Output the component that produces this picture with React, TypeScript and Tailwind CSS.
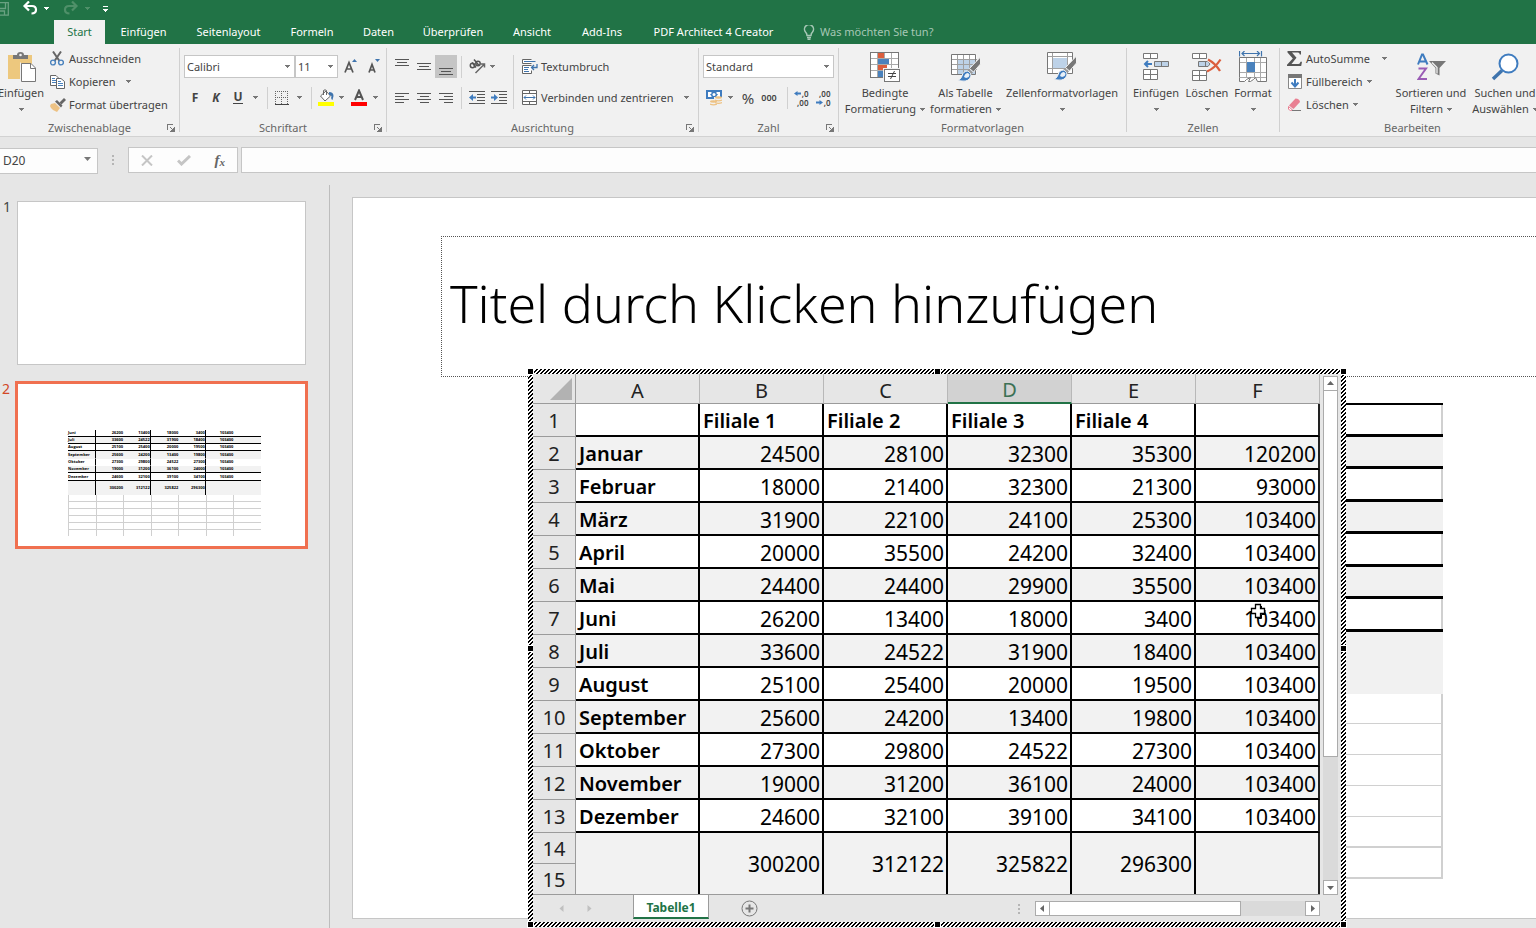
import type { ReactNode } from "react";

/* ---------- small shared pieces ---------- */

function Caret({ className = "text-[#777777]" }: { className?: string }) {
  return (
    <svg width="5" height="3" viewBox="0 0 5 3" className={"shrink-0 " + className} fill="currentColor" shapeRendering="crispEdges" aria-hidden="true">
      <path d="M0 0h5v1H0zM1 1h3v1H1zM2 2h1v1H2z" />
    </svg>
  );
}

function Divider({ className = "h-[22px]" }: { className?: string }) {
  return <div className={"w-px shrink-0 bg-[#d0d0d0] " + className} />;
}

function Launcher() {
  return (
    <svg width="8" height="8" viewBox="0 0 8 8" fill="none" stroke="#777" shapeRendering="crispEdges" aria-hidden="true">
      <path d="M0.5 6V0.5H6M3 3l3 3" />
      <path d="M7.5 3v4.5H3M6.5 4v2.5H4" />
    </svg>
  );
}

function Group({ label, className, launcher, children }: { label: string; className: string; launcher?: boolean; children: ReactNode }) {
  return (
    <section className={"flex shrink-0 " + className} aria-label={label}>
      <div className="flex min-w-0 flex-1 flex-col">
        <div className="flex h-[76px] pt-[3px]">{children}</div>
        <div className="flex h-4 items-center">
          <span className="w-4" />
          <span className="flex-1 text-center text-[#666666]">{label}</span>
          <span className="flex w-4 justify-center">
            {launcher && (
              <button type="button" aria-label={label + " anzeigen"}>
                <Launcher />
              </button>
            )}
          </span>
        </div>
      </div>
      <div className="my-1 w-px bg-[#d0d0d0]" />
    </section>
  );
}

function BigButton({ icon, lines, className }: { icon: ReactNode; lines: string[]; className: string }) {
  return (
    <button type="button" className={"flex shrink-0 flex-col items-center whitespace-nowrap " + className}>
      <span className="flex h-9 items-center justify-center pt-1">{icon}</span>
      <span className="flex h-5 items-center">{lines[0]}</span>
      <span className="flex h-3 items-center gap-1">
        {lines[1]}
        <Caret />
      </span>
    </button>
  );
}

function IconButton({ label, className = "w-[22px]", children }: { label: string; className?: string; children: ReactNode }) {
  return (
    <button type="button" aria-label={label} className={"flex h-[23px] shrink-0 items-center justify-center " + className}>
      {children}
    </button>
  );
}

/* ---------- icons ---------- */

const PasteIcon = () => (
  <svg width="30" height="32" viewBox="0 0 30 32" aria-hidden="true">
    <path d="M2 4h24v24H2z" fill="#edc87e" />
    <path d="M7 8V4h4a3.500 3 0 0 1 7 0h4v4z" fill="#777" />
    <circle cx="14.500" cy="4" r="1.300" fill="#f1f1f1" />
    <path d="M15.500 12.500H25l4.500 4.500v13.500h-14z" fill="#fff" stroke="#777" />
    <path d="M24.500 12.500v5h5" fill="none" stroke="#777" />
    <path d="M14.500 31V11.500" stroke="#f1f1f1" />
  </svg>
);

const CutIcon = () => (
  <svg width="14" height="15" viewBox="0 0 14 15" fill="none" aria-hidden="true">
    <path d="M3 0.500 9.500 10M11 0.500 4.500 10" stroke="#666" strokeWidth="2" />
    <circle cx="3" cy="11.500" r="2.400" stroke="#4a82bd" strokeWidth="1.400" />
    <circle cx="11" cy="11.500" r="2.400" stroke="#4a82bd" strokeWidth="1.400" />
  </svg>
);

const CopyIcon = () => (
  <svg width="15" height="14" viewBox="0 0 15 14" fill="#fff" stroke="#666" aria-hidden="true">
    <path d="M0.500 0.500H6L8.500 3v7.500h-8z" />
    <path d="M2 3.500h3M2 5.500h4M2 7.500h4" stroke="#4a82bd" />
    <path d="M6.500 3.500H11l3.500 3v7h-8z" />
    <path d="M8 6.500h3M8 8.500h5M8 10.500h5" stroke="#4a82bd" />
  </svg>
);

const BrushIcon = () => (
  <svg width="16" height="14" viewBox="0 0 16 14" aria-hidden="true">
    <path d="M1 6l4-1 5 5-3 4-2-1-2-1-2-2-1-2z" fill="#edc284" />
    <path d="M5 3.500 7 2l5.500 5.500L11 9.500z" fill="#666" />
    <path d="M9.500 4.500 14 0l2 2-4.500 4.500z" fill="#666" />
  </svg>
);

const BordersIcon = () => (
  <svg width="14" height="14" viewBox="0 0 14 14" fill="none" stroke="#666" shapeRendering="crispEdges" aria-hidden="true">
    <path d="M0 0.500h13M0 6.500h13M0.500 0v13M6.500 0v13M12.500 0v13" strokeDasharray="1 1" />
    <path d="M0 13.500h14" stroke="#444" />
  </svg>
);

const FillIcon = () => (
  <svg width="17" height="17" viewBox="0 0 17 17" fill="none" aria-hidden="true">
    <path d="M2.500 7 8 2l4.500 5L7 12z" fill="#fff" stroke="#666" />
    <path d="M5.500 6V1.500Q7 0 8.500 1.500V6" stroke="#666" />
    <path d="M11 3q4.500 0 4.500 4l-1 4q-2-1-1-4-1-1-2.500-1z" fill="#3f74ad" />
    <path d="M0 13h16v4H0z" fill="#ff0" />
  </svg>
);

const FontColorIcon = () => (
  <svg width="16" height="17" viewBox="0 0 16 17" aria-hidden="true">
    <path d="M4 11 8 1.500 12 11M5.500 8h5" fill="none" stroke="#555" strokeWidth="2" />
    <path d="M0 13h16v4H0z" fill="#f00" />
  </svg>
);

function SizeIcon({ up }: { up?: boolean }) {
  return (
    <svg width="14" height="15" viewBox="0 0 14 15" aria-hidden="true">
      <path d={up ? "M1 13.500 5 3.500l4 10M2.500 10h5" : "M2 13.500l3-8 3 8M3 11h4"} fill="none" stroke="#555" strokeWidth="1.700" />
      <path d={up ? "M8 3h5L10.500 0z" : "M8 0h5L10.500 3z"} fill="#3f74ad" />
    </svg>
  );
}

function LinesIcon({ d }: { d: string }) {
  return (
    <svg width="14" height="16" viewBox="0 0 14 16" fill="none" stroke="#555" shapeRendering="crispEdges" aria-hidden="true">
      <path d={d} />
    </svg>
  );
}

const OrientationIcon = () => (
  <svg width="17" height="16" viewBox="0 0 17 16" fill="none" stroke="#555" strokeWidth="1.500" aria-hidden="true">
    <circle cx="3.500" cy="6.500" r="2.200" />
    <path d="M3 3.500 7 8.500M5 0.500l5 6" />
    <circle cx="9" cy="4.500" r="2.200" />
    <path d="M6.500 14 15.500 5M12 5h3.500v3.500" stroke="#666" />
  </svg>
);

function IndentIcon({ right }: { right?: boolean }) {
  return (
    <svg width="16" height="13" viewBox="0 0 16 13" fill="none" shapeRendering="crispEdges" aria-hidden="true">
      <path d="M0 0.500h16M8 3.500h8M8 6.500h8M8 9.500h8M0 12.500h16" stroke="#555" />
      <path d={right ? "M0 5.500h3V3l4 3.500L3 10V7.500H0z" : "M7 5.500H4V3L0 6.500 4 10V7.500h3z"} fill="#3f7cbf" shapeRendering="auto" />
    </svg>
  );
}

const WrapIcon = () => (
  <svg width="16" height="16" viewBox="0 0 16 16" fill="none" stroke="#666" aria-hidden="true">
    <path d="M9.500 4.500h-9v-4h9M9.500 6.500h-9v8h9v-3" fill="#fff" />
    <path d="M2 2.500h11.500M2 8.500h5M2 10.500h4M2 12.500h5" stroke="#3f74ad" />
    <path d="M15 5v3.500H9.500M12 6l-2.500 2.500L12 11" stroke="#3f74ad" strokeWidth="1.300" />
  </svg>
);

const MergeIcon = () => (
  <svg width="16" height="16" viewBox="0 0 16 16" fill="#fff" stroke="#666" aria-hidden="true">
    <path d="M0.500 0.500h14v14h-14zM0.500 3.500h14M0.500 11.500h14M7.500 0.500v3M7.500 11.500v3" />
    <path d="M2 7.500h11M4 5.500l-2 2 2 2M11 5.500l2 2-2 2" stroke="#3f74ad" fill="none" />
  </svg>
);

const MoneyIcon = () => (
  <svg width="17" height="17" viewBox="0 0 17 17" aria-hidden="true">
    <path d="M0 1h16v9H0z" fill="#3f7cbf" />
    <path d="M2 3h3.500v1.500L4 5.500 5.500 7v1H2zM14 3h-3.500v1.500L12 5.500 10.500 7v1H14z" fill="#fff" />
    <circle cx="8" cy="5.500" r="1.500" fill="#fff" />
    <path d="M8 8h9v9H8zM4 11h5v6H4z" fill="#f1f1f1" />
    <ellipse cx="12.500" cy="8.500" rx="3.500" ry="1.200" fill="#edc284" />
    <path d="M9 10.500q3.500 1.500 7 0v1.300q-3.500 1.500-7 0zM9 13q3.500 1.500 7 0v1.300q-3.500 1.500-7 0z" fill="#edc284" />
    <ellipse cx="7.500" cy="12.500" rx="3.500" ry="1.200" fill="#edc284" />
    <path d="M4 14.500q3.500 1.500 7 0v1.300q-3.500 1.500-7 0z" fill="#edc284" />
  </svg>
);

function DecimalIcon({ more }: { more?: boolean }) {
  return (
    <span className="flex w-[15px] flex-col text-[8px] font-semibold leading-[9px] text-[#444444]">
      <span className={"flex items-center " + (more ? "justify-between" : "justify-end")}>
        {more && (
          <svg width="7" height="5" viewBox="0 0 7 5" fill="#3f7cbf" aria-hidden="true">
            <path d="M7 1.500H3.500V0L0 2.500 3.500 5V3.500H7z" />
          </svg>
        )}
        {more ? ",0" : ",00"}
      </span>
      <span className={"flex items-center " + (more ? "justify-end" : "justify-between")}>
        {!more && (
          <svg width="7" height="5" viewBox="0 0 7 5" fill="#3f7cbf" aria-hidden="true">
            <path d="M0 1.500h3.500V0L7 2.500 3.500 5V3.500H0z" />
          </svg>
        )}
        {more ? ",00" : ",0"}
      </span>
    </span>
  );
}

const ConditionalIcon = () => (
  <svg width="31" height="31" viewBox="0 0 31 31" shapeRendering="crispEdges" aria-hidden="true">
    <path d="M0.500 0.500h28v25h-28z" fill="#fff" stroke="#777" />
    <path d="M1 6.500h27M1 12.500h27M1 18.500h27M7.500 1v24M14.500 1v24M21.500 1v24" stroke="#aaa" />
    <path d="M8 1h6v5H8zM8 13h9v5H8z" fill="#db5e3d" />
    <path d="M8 7h11v5H8zM8 19h5v6H8z" fill="#4a82bd" />
    <path d="M13 16h18v15H13z" fill="#f1f1f1" />
    <path d="M14.500 17.500h15v12h-15z" fill="#fff" stroke="#777" />
    <path d="M18 21.500h8M18 24.500h8M24.500 19l-4 8" stroke="#444" fill="none" shapeRendering="auto" />
  </svg>
);

const StyleBrush = () => (
  <>
    <path d="M29.500 5v7l-7 8-4-3.500z" fill="#777" stroke="#f1f1f1" />
    <path d="M18 17l4 3.500-2 2-4-3.500z" fill="#999" />
    <path d="M6 28.500q4-1 5-4.500 1-5 6-5 3.500 2 3 5-2 6-9 5z" fill="#3f7cbf" stroke="#f1f1f1" />
    <path d="M13 25q1-4 4-4l1.500 1.500q0 3-3.500 3.500z" fill="#e8f0f8" />
  </>
);

const TableStyleIcon = () => (
  <svg width="30" height="30" viewBox="0 0 30 30" aria-hidden="true">
    <path d="M0.500 2.500h25v20h-25z" fill="#fff" />
    <path d="M7 8h18v14H7z" fill="#bdd2e8" />
    <path d="M0 7.500h26M0 12.500h26M0 17.500h26M6.500 2v21M12.500 2v21M18.500 2v21" stroke="#a0a0a0" />
    <path d="M0.500 2.500h24v20h-24z" fill="none" stroke="#777" />
    <StyleBrush />
  </svg>
);

const CellStyleIcon = () => (
  <svg width="30" height="30" viewBox="0 0 30 30" aria-hidden="true">
    <path d="M0.500 0.500h25v21h-25z" fill="#fff" />
    <path d="M0 4.500h26M0 16.500h26M5.500 0v22M20.500 0v22" stroke="#a0a0a0" />
    <path d="M6 6h14v10H6z" fill="#bdd2e8" />
    <path d="M0.500 0.500h25v21h-25z" fill="none" stroke="#777" />
    <g transform="translate(0 -1)">
      <StyleBrush />
    </g>
  </svg>
);

const InsertCellsIcon = () => (
  <svg width="27" height="28" viewBox="0 0 27 28" fill="#fff" stroke="#777" aria-hidden="true">
    <path d="M0.500 0.500h14v5h-14zM7.500 0.500v5M0.500 16.500h14v10h-14zM0.500 21.500h14M7.500 16.500v10" />
    <path d="M11.500 8.500h14v5h-14zM18.500 8.500v5" fill="#bdd2e8" />
    <path d="M9 11H2M5 8l-3 3 3 3" stroke="#3f7cbf" strokeWidth="2" fill="none" />
  </svg>
);

const DeleteCellsIcon = () => (
  <svg width="30" height="28" viewBox="0 0 30 28" fill="#fff" stroke="#777" aria-hidden="true">
    <path d="M0.500 0.500h14v5h-14zM7.500 0.500v5M0.500 17.500h14v10h-14zM0.500 22.500h14M7.500 17.500v10" />
    <path d="M6.500 8.500H16l2 2.500-2 2.500H6.500zM13.500 8.500v5" fill="#bdd2e8" />
    <path d="M15 18.500Q23 15 28.500 6.500M16 6.500Q23 10 28 18" stroke="#f1f1f1" strokeWidth="4" fill="none" />
    <path d="M15 18.500Q23 15 28.500 6.500M16 6.500Q23 10 28 18" stroke="#db5e3d" strokeWidth="2.300" fill="none" />
  </svg>
);

const FormatCellsIcon = () => (
  <svg width="29" height="32" viewBox="0 0 29 32" fill="none" stroke="#777" aria-hidden="true">
    <path d="M0.500 6.500h27v24H20l-3-3-4 3H0.500z" fill="#fff" stroke="none" />
    <path d="M1 11.500h27M1 21.500h27M1 26.500h27M7.500 6v21M15.500 6v21M21.500 6v24" stroke="#aaa" />
    <path d="M0.500 26.500v-20h27v24H18.500l-2-4-2 2-3 2h-2l2-4-4 2-2 2H0.500v-4" />
    <path d="M8 11h8v10H8z" fill="#4a82bd" stroke="none" />
    <path d="M0.500 0v5.500M22.500 0v5.500M2.500 2.500h18M5.500 0 3 2.500 5.500 5M18 0l2.500 2.500L18 5" stroke="#3f74ad" strokeWidth="1.200" />
  </svg>
);

const SigmaIcon = () => (
  <svg width="15" height="15" viewBox="0 0 15 15" aria-hidden="true">
    <path d="M0.500 0H14v3.500h-1.200Q12.500 1.600 11 1.600H5l4.500 5.200L4.500 13H11.500q1.500 0 2-2.200H15L14.200 15H0v-1.200L5.800 7.500 0.500 1.400z" fill="#555" />
  </svg>
);

const FillDownIcon = () => (
  <svg width="14" height="15" viewBox="0 0 14 15" aria-hidden="true">
    <path d="M0.500 0.500h13v14H0.500z" fill="#fff" stroke="#888" />
    <path d="M0 0h14v4H0z" fill="#777" />
    <path d="M7 5v7.500M3.500 8.500 7 12.500l3.500-4" stroke="#3f7cbf" strokeWidth="2" fill="none" />
  </svg>
);

const EraserIcon = () => (
  <svg width="15" height="14" viewBox="0 0 15 14" aria-hidden="true">
    <path d="M2 7.500 8.500 0.500q4 0 4.500 3.500L6.500 11z" fill="#e97f92" />
    <path d="M1.500 8.500 5.500 12l-2 0.500q-3-0.500-2-4z" fill="#fff" stroke="#e97f92" />
    <path d="M5 12.500h9" stroke="#777" />
  </svg>
);

const SortFilterIcon = () => (
  <svg width="29" height="28" viewBox="0 0 29 28" fill="none" aria-hidden="true">
    <path d="M1 11.500 5 1.500h1L10.500 11.500M2.500 8.500h6.500" stroke="#3f7cbf" strokeWidth="2" />
    <path d="M1.500 15.500h7.500L1.500 26H10" stroke="#9a5cb5" strokeWidth="2" />
    <path d="M12 8h17l-6.500 7v7.500l-4-2V15z" fill="#777" />
    <path d="M15 9.500l5 5v6" stroke="#f1f1f1" strokeWidth="1.300" />
  </svg>
);

const SearchIcon = () => (
  <svg width="28" height="28" viewBox="0 0 28 28" fill="none" aria-hidden="true">
    <path d="M11 17.500 2 26" stroke="#3f74ad" strokeWidth="3.500" />
    <circle cx="17.500" cy="10.500" r="9" fill="#fff" stroke="#3f7cbf" strokeWidth="2" />
  </svg>
);

/* ---------- header ---------- */

const tabs = [
  { name: "Start", width: "w-[51px]", active: true },
  { name: "Einfügen", width: "w-[77px]" },
  { name: "Seitenlayout", width: "w-[93px]" },
  { name: "Formeln", width: "w-[74px]" },
  { name: "Daten", width: "w-[59px]" },
  { name: "Überprüfen", width: "w-[90px]" },
  { name: "Ansicht", width: "w-[68px]" },
  { name: "Add-Ins", width: "w-[72px]" },
  { name: "PDF Architect 4 Creator", width: "w-[151px]" },
];

function Header() {
  return (
    <header className="bg-[#217346] text-white">
      <div className="flex h-5 items-start">
        <button type="button" aria-label="Speichern" className="w-[10px] overflow-hidden pt-[2px]">
          <svg width="10" height="14" viewBox="0 0 10 14" fill="none" stroke="#69a181" strokeWidth="1.300" aria-hidden="true">
            <path d="M0 0.700h8.300v12.500H0M0 6.500h5.500V1M0 9h4.500v4" />
          </svg>
        </button>
        <button type="button" aria-label="Rückgängig" className="ml-3 flex h-4 w-[30px] items-center gap-1.5">
          <svg width="16" height="14" viewBox="0 0 16 14" fill="none" stroke="#fff" strokeWidth="2.200" aria-hidden="true">
            <path d="M3 5h7q4 0 4 3.700T9.500 12.500" />
            <path d="M7 0.500 2.500 5 7 9.500" />
          </svg>
          <Caret className="text-white" />
        </button>
        <button type="button" aria-label="Wiederholen" className="ml-[11px] flex h-4 w-[30px] items-center gap-1.5">
          <svg width="16" height="14" viewBox="0 0 16 14" fill="none" stroke="#4f9069" strokeWidth="2.200" aria-hidden="true">
            <path d="M13 5H6q-4 0-4 3.700T6.500 12.500" />
            <path d="M9 0.500 13.500 5 9 9.500" />
          </svg>
          <Caret className="text-[#4f9069]" />
        </button>
        <button type="button" aria-label="Symbolleiste anpassen" className="ml-2.5 flex h-[17px] flex-col items-center justify-center gap-0.5">
          <span className="h-px w-[5px] bg-white" />
          <Caret className="text-white" />
        </button>
      </div>
      <nav className="flex h-6 whitespace-nowrap pl-[54px] text-[11px]" aria-label="Menüband">
        {tabs.map((t) => (
          <a
            key={t.name}
            href="#"
            className={"flex shrink-0 items-center justify-center " + t.width + (t.active ? " bg-[#f1f1f1] text-[#217346]" : "")}
          >
            {t.name}
          </a>
        ))}
        <button type="button" className="ml-3.5 flex items-center gap-[5px] text-[#a6c7b5]">
          <svg width="12" height="15" viewBox="0 0 12 15" fill="none" stroke="currentColor" strokeWidth="1.500" aria-hidden="true">
            <path d="M4 10.500q0-2-1.500-3.500a4.500 4.500 0 1 1 7 0Q8 8.500 8 10.500zM4 12.500h4M4.500 14.300h3" />
          </svg>
          Was möchten Sie tun?
        </button>
      </nav>
    </header>
  );
}

/* ---------- ribbon ---------- */

function Dropdown({ label, value, className }: { label: string; value: string; className: string }) {
  return (
    <div className={"relative h-[23px] shrink-0 " + className}>
      <select aria-label={label} className="h-full w-full appearance-none rounded-none border border-[#c6c6c6] bg-white pl-0.5 text-[11px] text-[#444444]">
        <option>{value}</option>
      </select>
      <span className="pointer-events-none absolute inset-y-0 right-[5px] flex items-center">
        <Caret />
      </span>
    </div>
  );
}

function Ribbon() {
  return (
    <div className="flex h-[93px] overflow-hidden border-b border-[#d2d2d2] bg-[#f1f1f1] text-[11px] leading-4 text-[#444444]">
      <Group label="Zwischenablage" className="w-[180px]" launcher>
        <BigButton icon={<PasteIcon />} lines={["Einfügen", ""]} className="-ml-1.5 w-[54px]" />
        <div className="flex flex-col whitespace-nowrap pl-0.5">
          <button type="button" className="flex h-[23px] items-center gap-[5px]">
            <CutIcon /> Ausschneiden
          </button>
          <button type="button" className="flex h-[23px] items-center gap-1">
            <CopyIcon /> Kopieren <span className="pl-1.5"><Caret /></span>
          </button>
          <button type="button" className="flex h-[23px] items-center gap-[3px]">
            <BrushIcon /> Format übertragen
          </button>
        </div>
      </Group>

      <Group label="Schriftart" className="w-[207px]" launcher>
        <div className="flex flex-col gap-2 pl-1 pt-2">
          <div className="flex">
            <Dropdown label="Schriftart" value="Calibri" className="w-[111px]" />
            <Dropdown label="Schriftgrad" value="11" className="w-[43px]" />
            <IconButton label="Schriftgrad vergrößern" className="w-[26px]"><SizeIcon up /></IconButton>
            <IconButton label="Schriftgrad verkleinern" className="w-[19px]"><SizeIcon /></IconButton>
          </div>
          <div className="flex items-center">
            <IconButton label="Fett" className="w-[22px] text-xs"><b>F</b></IconButton>
            <IconButton label="Kursiv" className="w-5 text-xs"><b className="italic">K</b></IconButton>
            <IconButton label="Unterstrichen" className="w-6 text-xs"><b className="border-b border-[#444444] leading-3">U</b></IconButton>
            <IconButton label="Unterstreichungsart" className="w-[11px]"><Caret /></IconButton>
            <span className="flex w-3 justify-center"><Divider /></span>
            <IconButton label="Rahmenlinien" className="w-[18px]"><BordersIcon /></IconButton>
            <IconButton label="Rahmenlinienauswahl" className="w-4"><Caret /></IconButton>
            <span className="flex w-2 justify-center"><Divider /></span>
            <IconButton label="Füllfarbe"><FillIcon /></IconButton>
            <IconButton label="Füllfarbenauswahl" className="w-2"><Caret /></IconButton>
            <IconButton label="Schriftfarbe" className="w-7"><FontColorIcon /></IconButton>
            <IconButton label="Schriftfarbenauswahl" className="w-[5px]"><Caret /></IconButton>
          </div>
        </div>
      </Group>

      <Group label="Ausrichtung" className="w-[312px]" launcher>
        <div className="flex pl-1 pt-2">
          <div className="flex flex-col gap-2">
            <div className="flex items-center">
              <IconButton label="Oben ausrichten"><LinesIcon d="M0 0.500h14M2 3.500h10M0 6.500h14" /></IconButton>
              <IconButton label="Zentriert ausrichten"><LinesIcon d="M0 4.500h14M2 7.500h10M0 10.500h14" /></IconButton>
              <IconButton label="Unten ausrichten" className="w-[22px] bg-[#c5c5c5]"><LinesIcon d="M0 9.500h14M2 12.500h10M0 15.500h14" /></IconButton>
              <span className="flex w-[9px] justify-center"><Divider /></span>
              <IconButton label="Ausrichtung" className="w-8 gap-1"><OrientationIcon /><Caret /></IconButton>
            </div>
            <div className="flex items-center">
              <IconButton label="Linksbündig"><LinesIcon d="M0 3.500h14M0 6.500h9M0 9.500h14M0 12.500h9" /></IconButton>
              <IconButton label="Zentriert"><LinesIcon d="M0 3.500h14M3 6.500h9M0 9.500h14M3 12.500h9" /></IconButton>
              <IconButton label="Rechtsbündig"><LinesIcon d="M0 3.500h14M5 6.500h9M0 9.500h14M5 12.500h9" /></IconButton>
              <span className="flex w-[9px] justify-center"><Divider /></span>
              <IconButton label="Einzug verkleinern"><IndentIcon /></IconButton>
              <IconButton label="Einzug vergrößern"><IndentIcon right /></IconButton>
            </div>
          </div>
          <Divider className="ml-[3px] h-[54px]" />
          <div className="flex flex-col gap-2 whitespace-nowrap pl-2">
            <button type="button" className="flex h-[23px] items-center gap-[3px]"><WrapIcon /> Textumbruch</button>
            <button type="button" className="flex h-[23px] items-center gap-[3px]"><MergeIcon /> Verbinden und zentrieren <span className="pl-2"><Caret /></span></button>
          </div>
        </div>
      </Group>

      <Group label="Zahl" className="w-[140px]" launcher>
        <div className="flex flex-col gap-2 pl-1 pt-2">
          <Dropdown label="Zahlenformat" value="Standard" className="w-[131px]" />
          <div className="flex items-center">
            <IconButton label="Buchhaltungsformat" className="w-8 gap-[5px]"><MoneyIcon /><Caret /></IconButton>
            <IconButton label="Prozentformat" className="w-[26px] text-[15px]">%</IconButton>
            <IconButton label="Tausendertrennzeichen" className="w-4 text-[9px] font-semibold">000</IconButton>
            <span className="ml-2 flex w-1 justify-center"><Divider /></span>
            <IconButton label="Dezimalstelle hinzufügen" className="w-6"><DecimalIcon more /></IconButton>
            <IconButton label="Dezimalstelle löschen" className="w-5"><DecimalIcon /></IconButton>
          </div>
        </div>
      </Group>

      <Group label="Formatvorlagen" className="w-[288px]">
        <BigButton icon={<ConditionalIcon />} lines={["Bedingte", "Formatierung"]} className="w-[92px]" />
        <BigButton icon={<TableStyleIcon />} lines={["Als Tabelle", "formatieren"]} className="w-[69px]" />
        <BigButton icon={<CellStyleIcon />} lines={["Zellenformatvorlagen"]} className="w-[124px]" />
      </Group>

      <Group label="Zellen" className="w-[153px]">
        <div className="flex pl-1">
          <BigButton icon={<InsertCellsIcon />} lines={["Einfügen"]} className="w-[50px]" />
          <BigButton icon={<DeleteCellsIcon />} lines={["Löschen"]} className="w-[52px]" />
          <BigButton icon={<FormatCellsIcon />} lines={["Format"]} className="w-10" />
        </div>
      </Group>

      <Group label="Bearbeiten" className="w-[266px]">
        <div className="flex w-[114px] flex-col whitespace-nowrap pl-[7px]">
          <button type="button" className="flex h-[23px] items-center gap-1"><SigmaIcon /> AutoSumme <span className="pl-2"><Caret /></span></button>
          <button type="button" className="flex h-[23px] items-center gap-1 pl-px"><FillDownIcon /> Füllbereich <Caret /></button>
          <button type="button" className="flex h-[23px] items-center gap-1"><EraserIcon /> Löschen <Caret /></button>
        </div>
        <BigButton icon={<SortFilterIcon />} lines={["Sortieren und", "Filtern"]} className="w-[74px]" />
        <BigButton icon={<SearchIcon />} lines={["Suchen und", "Auswählen"]} className="w-[74px]" />
      </Group>
    </div>
  );
}

/* ---------- formula bar ---------- */

function FormulaBar() {
  return (
    <div className="flex h-12 items-start pt-2.5 text-[#444444]">
      <div className="relative h-[26px] w-[98px]">
        <input aria-label="Namenfeld" defaultValue="D20" className="h-full w-full border border-l-0 border-[#c6c6c6] bg-[#fdfdfd] pl-[3px] text-xs" />
        <svg width="7" height="4" viewBox="0 0 7 4" fill="#777" className="pointer-events-none absolute right-[7px] top-2.5" aria-hidden="true">
          <path d="M0 0h7L3.500 4z" />
        </svg>
      </div>
      <svg width="30" height="26" viewBox="0 0 30 26" fill="#b5b5b5" shapeRendering="crispEdges" aria-hidden="true">
        <path d="M14 8h2v2h-2zM14 12h2v2h-2zM14 16h2v2h-2z" />
      </svg>
      <div className="flex h-[26px] w-[110px] items-center justify-between border border-[#c6c6c6] bg-[#fdfdfd] px-3">
        <button type="button" aria-label="Abbrechen">
          <svg width="12" height="11" viewBox="0 0 12 11" stroke="#c5c5c5" strokeWidth="2" aria-hidden="true"><path d="M1 0.500l10 10M11 0.500l-10 10" /></svg>
        </button>
        <button type="button" aria-label="Eingeben">
          <svg width="14" height="11" viewBox="0 0 14 11" fill="none" stroke="#c5c5c5" strokeWidth="3" aria-hidden="true"><path d="M1 5.500 4.500 9 13 1" /></svg>
        </button>
        <button type="button" aria-label="Funktion einfügen" className="flex items-end font-['Liberation_Serif',serif] text-[15px] font-bold italic leading-4 text-[#666666]">
          f<span className="text-[11px] leading-3">x</span>
        </button>
      </div>
      <input aria-label="Bearbeitungsleiste" className="ml-[3px] h-[26px] min-w-0 flex-1 border border-r-0 border-[#c6c6c6] bg-[#fdfdfd] px-1 text-xs" />
    </div>
  );
}

/* ---------- slide thumbnails ---------- */

const months: [string, ...number[]][] = [
  ["Januar", 24500, 28100, 32300, 35300, 120200],
  ["Februar", 18000, 21400, 32300, 21300, 93000],
  ["März", 31900, 22100, 24100, 25300, 103400],
  ["April", 20000, 35500, 24200, 32400, 103400],
  ["Mai", 24400, 24400, 29900, 35500, 103400],
  ["Juni", 26200, 13400, 18000, 3400, 103400],
  ["Juli", 33600, 24522, 31900, 18400, 103400],
  ["August", 25100, 25400, 20000, 19500, 103400],
  ["September", 25600, 24200, 13400, 19800, 103400],
  ["Oktober", 27300, 29800, 24522, 27300, 103400],
  ["November", 19000, 31200, 36100, 24000, 103400],
  ["Dezember", 24600, 32100, 39100, 34100, 103400],
];
const totals = [300200, 312122, 325822, 296300];

function MiniTable() {
  const rule = (c: number) => (c === 0 || c === 2 || c === 4 ? " border-r border-r-black" : "");
  return (
    <table className="w-[193px] table-fixed border-separate border-spacing-0 font-['Open_Sans','Noto_Sans',sans-serif] text-[4px] font-bold leading-[4px] text-black">
      <tbody>
        {months.slice(5).map((m, i) => (
          <tr key={m[0]} className={i % 2 ? "bg-[#f2f2f2]" : "bg-white"}>
            {m.map((v, c) => (
              <td
                key={c}
                className={
                  (i === 3 || i === 6 ? "h-2 p-0 " : "h-[7px] p-0 ") +
                  (c === 0 ? "text-left" : "text-right") +
                  rule(c) +
                  (i === 3 || i === 4 ? " border-b border-b-transparent" : " border-b border-b-black")
                }
              >
                {v}
              </td>
            ))}
            <td className={"p-0 " + (i === 3 || i === 4 ? "" : "border-b border-b-black")} />
          </tr>
        ))}
        <tr className="bg-[#f2f2f2]">
          <td className="h-[14px] border-r border-black p-0" />
          {totals.map((t, c) => (
            <td key={t} className={"p-0 text-right" + rule(c + 1)}>{t}</td>
          ))}
          <td className="p-0" />
          <td className="p-0" />
        </tr>
        {[0, 1, 2, 3, 4, 5].map((r) => (
          <tr key={r}>
            {[0, 1, 2, 3, 4, 5, 6].map((c) => (
              <td key={c} className={"border-l border-[#d0d0d0] p-0 " + (r < 5 ? "h-[7px] border-b" : "h-1.5")} />
            ))}
          </tr>
        ))}
      </tbody>
    </table>
  );
}

function Thumbnails() {
  return (
    <aside className="w-[330px] shrink-0 border-r border-[#bdbdbd] pt-4 text-sm leading-3" aria-label="Folien">
      <div className="flex">
        <span className="w-[17px] pl-[3px] text-[#444444]">1</span>
        <button type="button" aria-label="Folie 1" className="h-[164px] w-[289px] border border-[#c6c6c6] bg-white" />
      </div>
      <div className="mt-4 flex">
        <span className="w-[15px] pl-[2px] pt-0.5 text-[#d24726]">2</span>
        <button type="button" aria-label="Folie 2" className="flex h-[168px] w-[293px] items-start border-[3px] border-[#f07050] bg-white pl-[50px] pt-[46px]">
          <MiniTable />
        </button>
      </div>
    </aside>
  );
}

/* ---------- embedded worksheet ---------- */

function ColumnHead({ name, active }: { name: string; active?: boolean }) {
  return (
    <th
      scope="col"
      className={
        "h-[30px] border-b border-r border-r-[#b8b8b8] p-0 pt-1 font-normal leading-6 " +
        (active ? "border-b-2 border-b-[#217346] bg-[#d2d2d2] text-[#3c7155]" : "border-b-[#9b9b9b] bg-[#e6e6e6] text-[#222222]")
      }
    >
      {name}
    </th>
  );
}

const rowHead = "border-b border-r border-[#9b9b9b] bg-[#e6e6e6] p-0 pt-0.5 font-normal text-[#222222]";
const cell = "border-black py-0 pl-[3px] pr-[2px]";
const edge = (last: boolean) => (last ? " border-r-2 border-r-[#222222]" : " border-r-2");

function Sheet() {
  return (
    <table className="w-[787px] table-fixed border-separate border-spacing-0 text-xl leading-7 text-black">
      <colgroup>
        <col className="w-[43px]" />
        {["A", "B", "C", "D", "E", "F"].map((c) => (
          <col key={c} className="w-[124px]" />
        ))}
      </colgroup>
      <thead>
        <tr>
          <th className="border-b border-r border-[#9b9b9b] bg-[#e6e6e6] p-0">
            <svg width="22" height="22" viewBox="0 0 22 22" className="ml-auto mr-[3px]" aria-hidden="true">
              <path d="M22 0v22H0z" fill="#b2b2b2" />
            </svg>
          </th>
          {["A", "B", "C", "D", "E", "F"].map((c) => (
            <ColumnHead key={c} name={c} active={c === "D"} />
          ))}
        </tr>
      </thead>
      <tbody>
        <tr className="bg-white">
          <th scope="row" className={rowHead + " h-[33px]"}>1</th>
          {["", "Filiale 1", "Filiale 2", "Filiale 3", "Filiale 4", ""].map((t, i) => (
            <td key={i} className={cell + edge(i === 5) + " border-b-2 pt-0.5 text-left font-semibold"}>{t}</td>
          ))}
        </tr>
        {months.map((m, r) => (
          <tr key={m[0]} className={r % 2 ? "bg-white" : "bg-[#f2f2f2]"}>
            <th scope="row" className={rowHead + " h-[33px]"}>{r + 2}</th>
            {m.map((v, c) => (
              <td key={c} className={cell + edge(c === 5) + " border-b-2 pt-0.5 " + (c === 0 ? "text-left font-semibold" : "text-right text-[21px] leading-7")}>{v}</td>
            ))}
          </tr>
        ))}
        <tr className="bg-[#f2f2f2]">
          <th scope="row" className={rowHead + " h-[31px]"}>14</th>
          <td rowSpan={2} className={cell + edge(false)} />
          {totals.map((t) => (
            <td key={t} rowSpan={2} className={cell + edge(false) + " text-right text-[21px] leading-7"}>{t}</td>
          ))}
          <td rowSpan={2} className={cell + edge(true)} />
        </tr>
        <tr>
          <th scope="row" className={rowHead + " h-[30px] border-b-0"}>15</th>
        </tr>
      </tbody>
    </table>
  );
}

function ScrollButton({ label, d }: { label: string; d: string }) {
  return (
    <button type="button" aria-label={label} className="flex size-[15px] shrink-0 items-center justify-center border border-[#ababab] bg-white">
      <svg width="7" height="7" viewBox="0 0 7 7" fill="#666" aria-hidden="true"><path d={d} /></svg>
    </button>
  );
}

const hatch =
  "bg-[linear-gradient(135deg,#000_0_25%,#fff_25%_50%,#000_50%_75%,#fff_75%)] bg-[length:4px_4px]";

const handles = [
  "left-0 top-0",
  "left-[407px] top-0",
  "right-0 top-0",
  "left-0 top-[277px]",
  "right-0 top-[277px]",
  "left-0 bottom-0",
  "left-[407px] bottom-0",
  "right-0 bottom-0",
];

function EmbeddedSheet() {
  return (
    <div className={"absolute left-[175px] top-[171px] w-[818px] p-[5px] " + hatch}>
      {handles.map((h) => (
        <span key={h} className={"absolute size-[5px] bg-black outline outline-1 outline-white " + h} />
      ))}
      <div className="relative flex flex-col bg-[#e6e6e6]">
        <div className="flex">
          <div className="border-b border-[#9b9b9b]"><Sheet /></div>
          <div className="mt-0.5 ml-[3px] flex w-[15px] flex-col bg-[#dadada]">
            <ScrollButton label="Nach oben" d="M0 5h7L3.500 1z" />
            <div className="h-[366px] border border-t-0 border-[#ababab] bg-white" />
            <div className="flex-1" />
            <ScrollButton label="Nach unten" d="M0 2h7L3.500 6z" />
          </div>
        </div>
        <div className="flex h-[27px] items-start">
          <div className="flex h-[26px] w-[100px] items-center gap-[23px] pl-[26px]">
            <button type="button" aria-label="Vorheriges Blatt">
              <svg width="5" height="7" viewBox="0 0 5 7" fill="#c0c0c0" aria-hidden="true"><path d="M4.500 0v7L0.500 3.500z" /></svg>
            </button>
            <button type="button" aria-label="Nächstes Blatt">
              <svg width="5" height="7" viewBox="0 0 5 7" fill="#c0c0c0" aria-hidden="true"><path d="M0.500 0v7l4-3.500z" /></svg>
            </button>
          </div>
          <button type="button" className="h-6 w-[76px] border-x border-b-2 border-x-[#9b9b9b] border-b-[#217346] bg-white pt-[3px] text-xs font-bold text-[#217346]">
            Tabelle1
          </button>
          <button type="button" aria-label="Neues Blatt" className="ml-8 mt-[5px]">
            <svg width="17" height="17" viewBox="0 0 17 17" fill="none" stroke="#777" aria-hidden="true">
              <circle cx="8.500" cy="8.500" r="7.500" />
              <path d="M4.500 8.500h8M8.500 4.500v8" strokeWidth="2" />
            </svg>
          </button>
          <div className="ml-auto mr-[21px] mt-[6px] flex items-center">
            <svg width="17" height="12" viewBox="0 0 17 12" fill="#b5b5b5" shapeRendering="crispEdges" aria-hidden="true">
              <path d="M0 1h2v2H0zM0 5h2v2H0zM0 9h2v2H0z" />
            </svg>
            <div className="flex w-[285px] bg-[#dadada]">
              <ScrollButton label="Nach links" d="M5 0v7L1 3.500z" />
              <div className="w-[191px] border border-l-0 border-[#ababab] bg-white" />
              <div className="flex-1" />
              <ScrollButton label="Nach rechts" d="M2 0v7l4-3.500z" />
            </div>
          </div>
        </div>
      </div>
    </div>
  );
}

function SlideTable() {
  return (
    <div className="absolute left-[957px] top-[205px] flex w-[133px] flex-col" aria-hidden="true">
      <div className="h-0.5 bg-black" />
      {["h-8", "h-8", "h-[33px]", "h-8", "h-[33px]", "h-8", "h-[33px]"].map((h, i) => (
        <div key={i} className={"flex flex-col " + h + (i % 2 ? " bg-[#f1f1f1]" : " bg-white")}>
          <div className={"flex-1" + (i % 2 ? "" : " border-r-2 border-[#d0d0d0]")} />
          <div className="h-[3px] bg-black" />
        </div>
      ))}
      <div className="h-[62px] bg-[#f1f1f1]" />
      {["h-[30px] border-b", "h-[31px] border-b", "h-[31px] border-b", "h-[31px] border-b", "h-[31px] border-b-2", "h-[31px] border-b-2"].map((h, i) => (
        <div key={i} className={"border-r-2 border-[#d0d0d0] " + h} />
      ))}
    </div>
  );
}

function SlideEditor() {
  return (
    <main className="min-w-0 flex-1 overflow-hidden pb-[9px] pl-[22px] pt-3">
      <div className="relative h-full border border-r-0 border-[#c6c6c6] bg-white">
        <div className="ml-[88px] mt-[38px] flex h-[141px] items-center overflow-hidden border border-r-0 border-dotted border-[#555555] pl-2">
          <h1 className="whitespace-nowrap pb-2 font-['Noto_Sans','Open_Sans',sans-serif] text-[52px] font-light leading-none text-black">
            Titel durch Klicken hinzufügen
          </h1>
        </div>
        <SlideTable />
        <EmbeddedSheet />
        <svg width="16" height="17" viewBox="0 0 16 17" className="absolute left-[897px] top-[405px]" aria-hidden="true">
          <path d="M5.500 1.500h5v4h4v5h-4v4h-5v-4h-4v-5h4z" fill="#fff" stroke="#000" strokeWidth="1.300" />
          <path d="M11.500 3v2.500M15 7v4.500h-3.500v4H7" fill="none" stroke="#000" />
        </svg>
      </div>
    </main>
  );
}

export default function App() {
  return (
    <div className="flex h-screen flex-col overflow-hidden bg-[#e6e6e6] font-['Noto_Sans','Open_Sans',sans-serif]">
      <Header />
      <Ribbon />
      <FormulaBar />
      <div className="flex min-h-0 flex-1">
        <Thumbnails />
        <SlideEditor />
      </div>
    </div>
  );
}
